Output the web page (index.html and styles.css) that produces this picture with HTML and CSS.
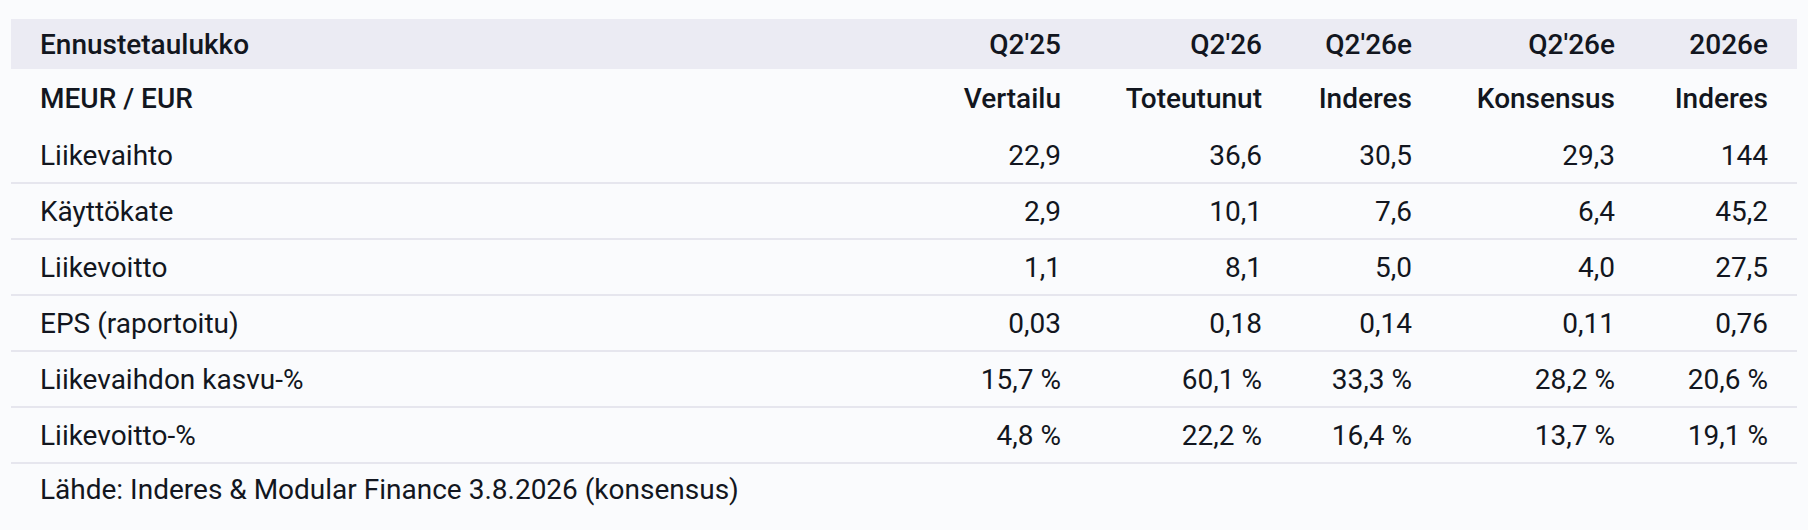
FILE: index.html
```html
<!DOCTYPE html>
<html lang="fi">
<head>
<meta charset="utf-8">
<title>Ennustetaulukko</title>
<link rel="stylesheet" href="styles.css">
</head>
<body>
<div class="table">
  <div class="row head">
    <div class="label">Ennustetaulukko</div>
    <div class="num">Q2'25</div>
    <div class="num">Q2'26</div>
    <div class="num">Q2'26e</div>
    <div class="num">Q2'26e</div>
    <div class="num">2026e</div>
  </div>
  <div class="row sub">
    <div class="label">MEUR / EUR</div>
    <div class="num">Vertailu</div>
    <div class="num">Toteutunut</div>
    <div class="num">Inderes</div>
    <div class="num">Konsensus</div>
    <div class="num">Inderes</div>
  </div>
  <div class="row body">
    <div class="label">Liikevaihto</div>
    <div class="num">22,9</div>
    <div class="num">36,6</div>
    <div class="num">30,5</div>
    <div class="num">29,3</div>
    <div class="num">144</div>
  </div>
  <div class="row body">
    <div class="label">Käyttökate</div>
    <div class="num">2,9</div>
    <div class="num">10,1</div>
    <div class="num">7,6</div>
    <div class="num">6,4</div>
    <div class="num">45,2</div>
  </div>
  <div class="row body">
    <div class="label">Liikevoitto</div>
    <div class="num">1,1</div>
    <div class="num">8,1</div>
    <div class="num">5,0</div>
    <div class="num">4,0</div>
    <div class="num">27,5</div>
  </div>
  <div class="row body">
    <div class="label">EPS (raportoitu)</div>
    <div class="num">0,03</div>
    <div class="num">0,18</div>
    <div class="num">0,14</div>
    <div class="num">0,11</div>
    <div class="num">0,76</div>
  </div>
  <div class="row body">
    <div class="label">Liikevaihdon kasvu-%</div>
    <div class="num">15,7 %</div>
    <div class="num">60,1 %</div>
    <div class="num">33,3 %</div>
    <div class="num">28,2 %</div>
    <div class="num">20,6 %</div>
  </div>
  <div class="row body">
    <div class="label">Liikevoitto-%</div>
    <div class="num">4,8 %</div>
    <div class="num">22,2 %</div>
    <div class="num">16,4 %</div>
    <div class="num">13,7 %</div>
    <div class="num">19,1 %</div>
  </div>
  <div class="source">Lähde: Inderes &amp; Modular Finance 3.8.2026 (konsensus)</div>
</div>
</body>
</html>
```

FILE: styles.css
```css
html, body {
  background: #fafbfd;
}
body {
  margin: 19px 11px 0 11px;
  font-family: Roboto, "Liberation Sans", sans-serif;
  font-size: 28px;
  color: #121620;
}
.table {
  display: flex;
  flex-direction: column;
}
.row {
  display: grid;
  grid-template-columns: 1fr 200px 201px 150px 203px 153px;
  align-items: center;
  padding: 0 29px;
}
.num {
  text-align: right;
  white-space: nowrap;
}
.head {
  height: 50px;
  background: #ebebf3;
  font-weight: 500;
}
.sub {
  height: 59px;
  font-weight: 500;
}
.body {
  height: 54px;
  border-bottom: 2px solid #e6e6ee;
}
.source {
  padding: 0 29px;
  height: 51px;
  display: flex;
  align-items: center;
}
```
